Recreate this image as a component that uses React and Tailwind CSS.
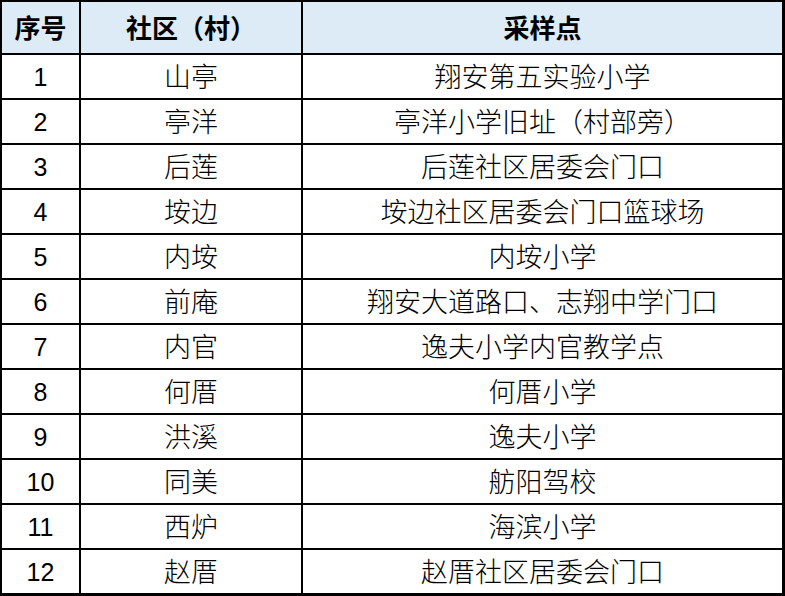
import React from 'react';

const rows = [
  ['1', '山亭', '翔安第五实验小学'],
  ['2', '亭洋', '亭洋小学旧址（村部旁）'],
  ['3', '后莲', '后莲社区居委会门口'],
  ['4', '垵边', '垵边社区居委会门口篮球场'],
  ['5', '内垵', '内垵小学'],
  ['6', '前庵', '翔安大道路口、志翔中学门口'],
  ['7', '内官', '逸夫小学内官教学点'],
  ['8', '何厝', '何厝小学'],
  ['9', '洪溪', '逸夫小学'],
  ['10', '同美', '舫阳驾校'],
  ['11', '西炉', '海滨小学'],
  ['12', '赵厝', '赵厝社区居委会门口'],
];

const cjk = { fontFamily: '"Liberation Sans", "Noto Sans CJK SC", sans-serif' };

export default function App() {
  return (
    <div className="w-[785px] h-[596px] bg-white text-black" style={cjk}>
      <div className="w-[785px] border-l-2 border-t-2 border-r-[3px] border-b-[3px] border-black">
        <div className="flex h-[53px] border-b-2 border-black bg-[#ddebf7] text-[26px] font-bold">
          <div className="w-[79px] border-r-2 border-black flex items-center justify-center pt-[3px]">序号</div>
          <div className="w-[222px] border-r-2 border-black flex items-center justify-center pt-[3px]">社区（村）</div>
          <div className="flex-1 flex items-center justify-center pt-[3px]">采样点</div>
        </div>
        {rows.map((r, i) => (
          <div
            key={r[0]}
            className={i === rows.length - 1 ? 'flex h-[43px]' : 'flex h-[45px] border-b-2 border-black'}
          >
            <div className="w-[79px] border-r-2 border-black flex items-center justify-center pt-[3px] text-[25px]">{r[0]}</div>
            <div className="w-[222px] border-r-2 border-black flex items-center justify-center pt-[3px] text-[27px] font-light">{r[1]}</div>
            <div className="flex-1 flex items-center justify-center pt-[3px] text-[27px] font-light">{r[2]}</div>
          </div>
        ))}
      </div>
    </div>
  );
}
